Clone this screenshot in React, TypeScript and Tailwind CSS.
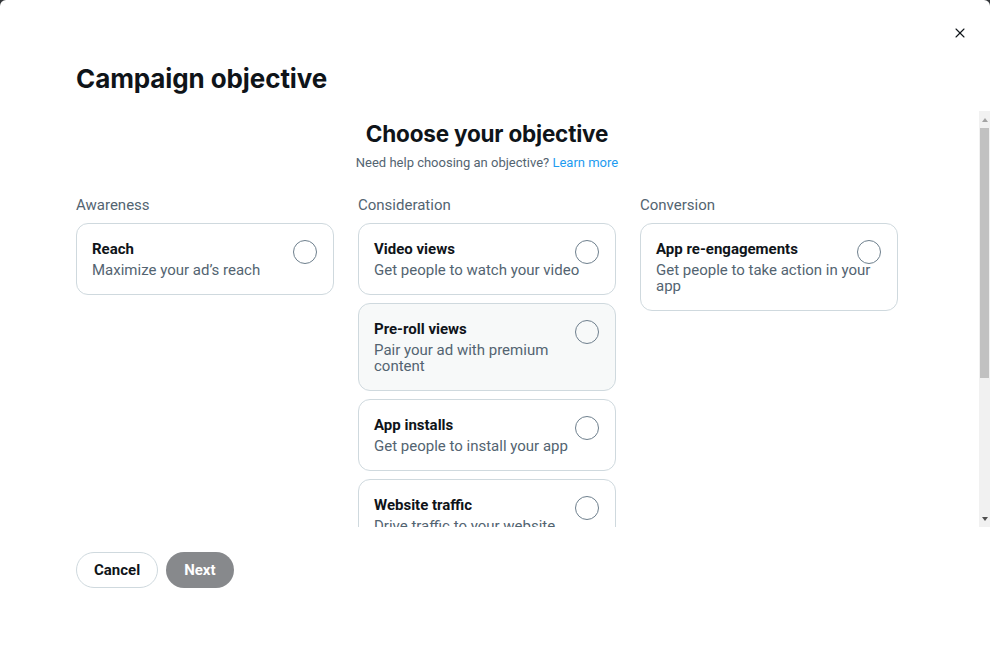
import { X } from "lucide-react"

type Objective = {
  title: string
  desc: string
  hover?: boolean
}

const columns: Array<{ label: string; items: Objective[] }> = [
  {
    label: "Awareness",
    items: [{ title: "Reach", desc: "Maximize your ad\u2019s reach" }],
  },
  {
    label: "Consideration",
    items: [
      { title: "Video views", desc: "Get people to watch your video" },
      { title: "Pre-roll views", desc: "Pair your ad with premium content", hover: true },
      { title: "App installs", desc: "Get people to install your app" },
      { title: "Website traffic", desc: "Drive traffic to your website" },
      { title: "Engagements", desc: "Get people to engage with your posts" },
    ],
  },
  {
    label: "Conversion",
    items: [{ title: "App re-engagements", desc: "Get people to take action in your app" }],
  },
]

function ObjectiveCard({ item }: { item: Objective }) {
  return (
    <div
      className={`relative flex flex-col rounded-xl border border-[#cfd9de] pl-[15px] pr-4 pt-[15px] pb-[16px] ${
        item.hover ? "bg-[#f7f9f9]" : "bg-white"
      }`}
    >
      <span className="pr-8 text-[15px] leading-5 font-bold text-[#0f1419]">{item.title}</span>
      <span className="mt-[3px] text-[15px] leading-4 text-[#536471]">{item.desc}</span>
      {/* radio */}
      <span className="absolute right-4 top-4 h-6 w-6 rounded-full border border-[#6e7f8d]" />
    </div>
  )
}

export default function App() {
  return (
    <div
      className="h-[646px] w-[990px] bg-[#333639] overflow-hidden"
      style={{ fontFamily: '"Segoe UI", Roboto, "Liberation Sans", sans-serif' }}
    >
      <div className="flex h-full flex-col rounded-t-[6px] bg-white">
        <div className="flex justify-end pt-[22px] pr-[19px]">
          <button className="flex h-[22px] w-[22px] items-center justify-center text-[#0f1419]">
            <X size={16} strokeWidth={1.6} />
          </button>
        </div>
        <h1 className="mt-[19px] pl-[76px] text-[26px] leading-8 font-bold text-[#0f1419] font-['Inter',sans-serif] tracking-[-0.1px]">
          Campaign objective
        </h1>

        <div className="mt-[16px] flex h-[416px]">
          <div className="flex-1 overflow-hidden pl-[76px] pr-[81px]">
            <div className="flex flex-col items-center pt-[9px]">
              <h2 className="text-[22.5px] leading-7 font-bold text-[#0f1419] font-['Inter',sans-serif] tracking-[-0.2px]">
                Choose your objective
              </h2>
              <p className="mt-[7px] text-[13px] leading-4 text-[#536471]">
                Need help choosing an objective? <a className="text-[#1d9bf0]">Learn more</a>
              </p>
            </div>
            <div className="mt-[24px] grid grid-cols-3 gap-6">
              {columns.map((col) => (
                <div key={col.label} className="flex flex-col">
                  <span className="text-[15px] leading-5 text-[#536471]">{col.label}</span>
                  <div className="mt-2 flex flex-col gap-2">
                    {col.items.map((item) => (
                      <ObjectiveCard key={item.title} item={item} />
                    ))}
                  </div>
                </div>
              ))}
            </div>
          </div>
          {/* scrollbar */}
          <div className="flex w-[11px] flex-col items-center bg-[#f1f1f1]">
            <div className="flex h-[17px] items-center justify-center">
              <span className="h-0 w-0 border-x-[3.5px] border-b-[4px] border-x-transparent border-b-[#a3a3a3]" />
            </div>
            <div className="h-[250px] w-[9px] bg-[#c1c1c1]" />
            <div className="flex-1" />
            <div className="flex h-[17px] items-center justify-center">
              <span className="h-0 w-0 border-x-[3.5px] border-t-[4px] border-x-transparent border-t-[#505050]" />
            </div>
          </div>
        </div>

        <div className="mt-[25px] flex gap-2 pl-[76px]">
          <button className="h-9 rounded-full border border-[#cfd9de] px-[17px] text-[15px] font-bold text-[#0f1419]">
            Cancel
          </button>
          <button className="h-9 rounded-full bg-[#87898c] px-[18px] text-[15px] font-bold text-white">
            Next
          </button>
        </div>
      </div>
    </div>
  )
}
